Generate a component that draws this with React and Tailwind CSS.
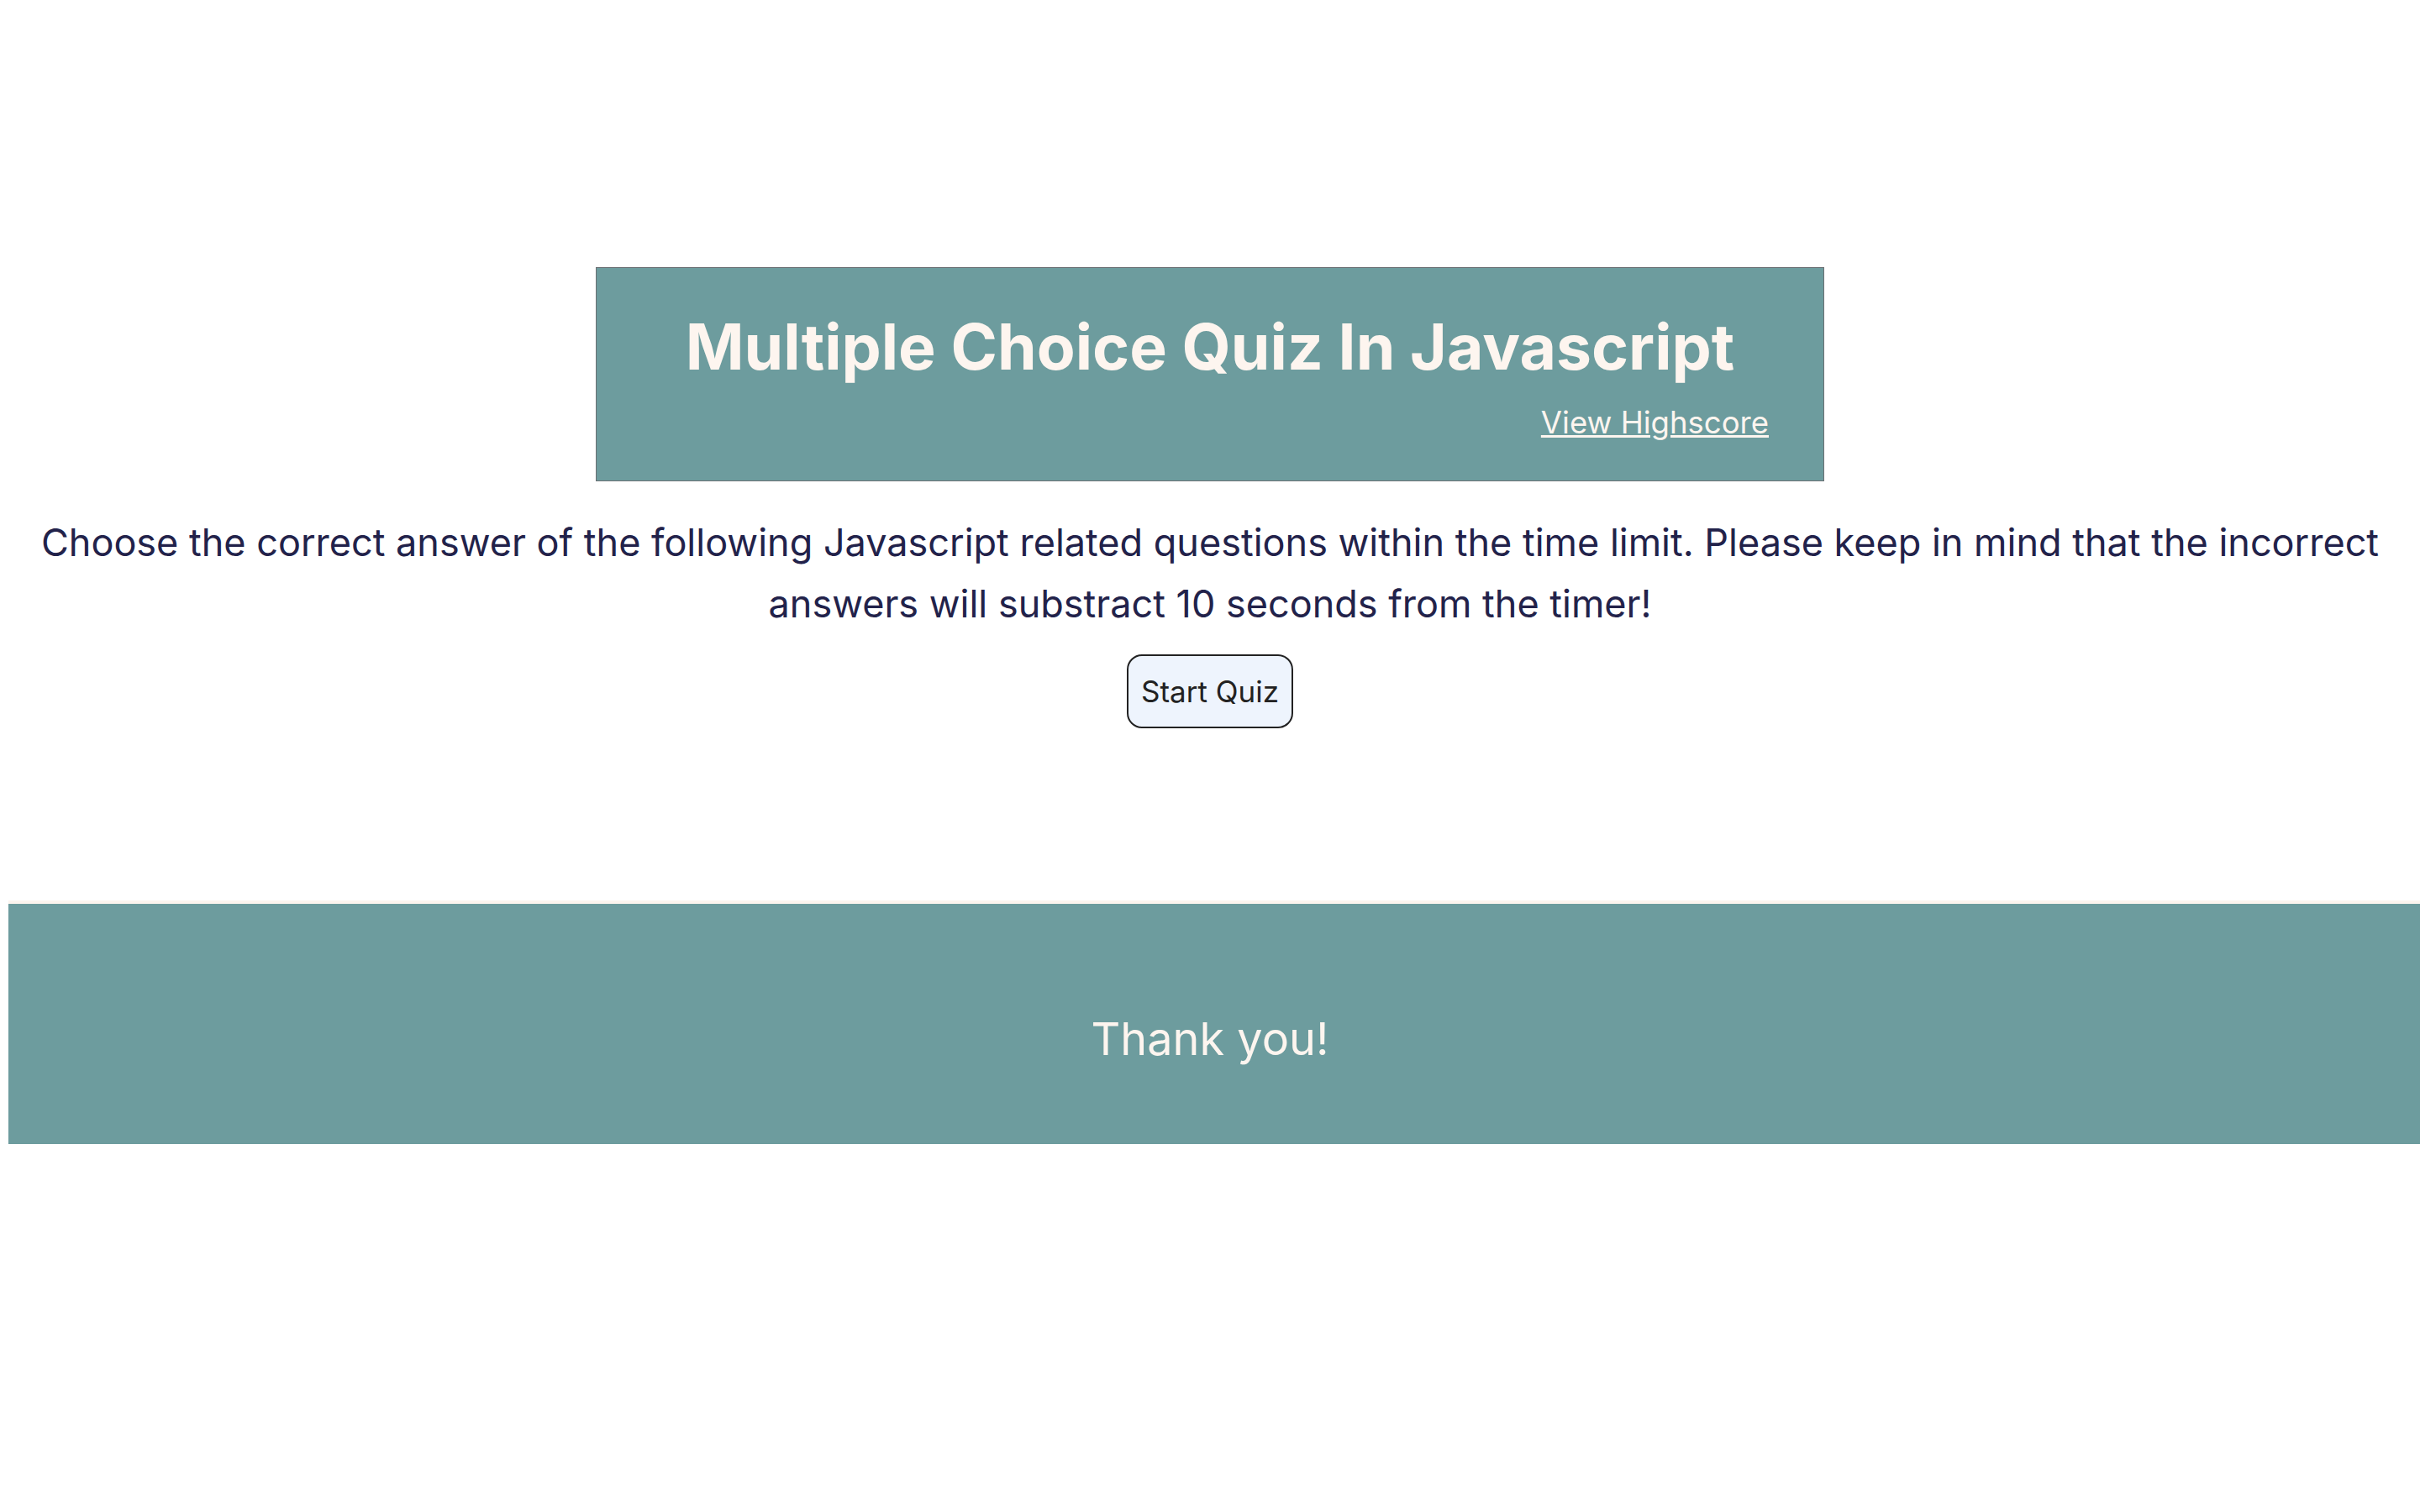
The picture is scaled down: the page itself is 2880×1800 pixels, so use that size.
export default function App() {
  return (
    <div className="min-h-screen w-full overflow-x-hidden bg-white font-['Inter','Liberation_Sans',sans-serif]">
      <header className="pt-[318px]">
        <div className="mx-auto box-content w-1/2 border border-[#6b6f73] bg-[#6d9c9e] px-[10px] pt-[46px] pb-[39px]">
          <h1 className="text-center text-[75px] font-bold leading-[96px] text-[#fdf5ef]">
            Multiple Choice Quiz In Javascript
          </h1>
          <div className="mt-[12px] pr-[55px] text-right">
            <a href="#" className="text-[36.5px] leading-[60px] text-[#fdf5ef] underline">
              View Highscore
            </a>
          </div>
        </div>
      </header>

      <main className="flex flex-col items-center">
        <p className="mt-[36px] px-[30px] text-center text-[45px] leading-[73px] text-[#22224a]">
          Choose the correct answer of the following Javascript related questions within the time limit. Please keep in
          mind that the incorrect answers will substract 10 seconds from the timer!
        </p>
        <button className="mt-[24px] h-[88px] rounded-[18px] border-2 border-[#222] bg-[#eef4fd] px-[15px] text-[35px] text-[#222]">
          Start Quiz
        </button>
      </main>

      <footer className="mt-[205px] ml-[10px] w-full border-t-4 border-[#fcf4ee] bg-[#6d9c9e] pt-[116px] pb-[80px] pr-[20px] text-center">
        <p className="text-[54px] leading-[90px] text-[#fdf5ef]">Thank you!</p>
      </footer>
    </div>
  );
}
